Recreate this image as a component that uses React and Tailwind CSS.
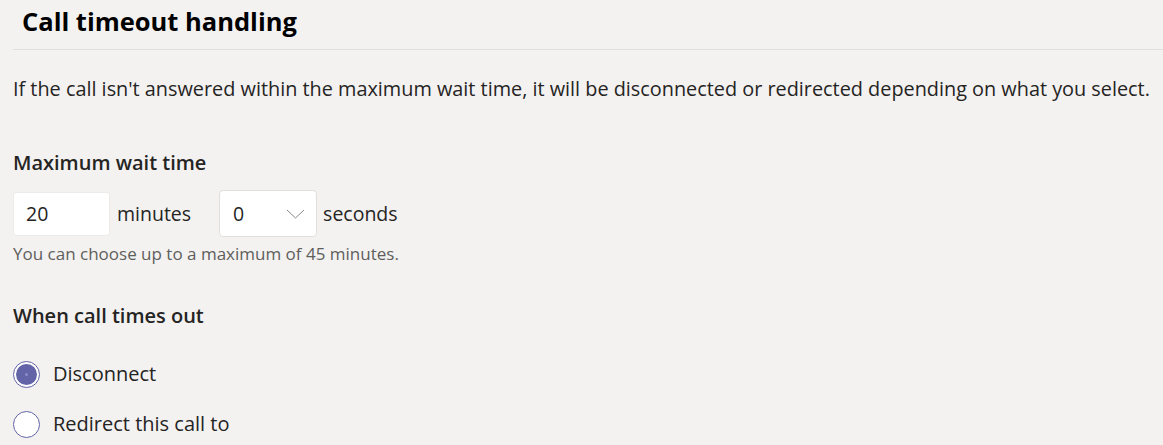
import React, { useState } from 'react';

const RadioOption = ({ label, checked, onSelect }) => (
    <label className="flex h-[28px] items-center gap-[13px] cursor-pointer" onClick={onSelect}>
        <span className="relative flex h-[27px] w-[27px] shrink-0 items-center justify-center rounded-full border border-[#6264a7] bg-white">
            {checked && (
                <span className="flex h-[21px] w-[21px] items-center justify-center rounded-full bg-[#6264a7]">
                    <span className="h-[3px] w-[3px] rounded-full bg-[#8b8cc7]" />
                </span>
            )}
        </span>
        <span className="text-[20px] leading-[28px] text-[#252423]">{label}</span>
    </label>
);

const App = () => {
    const [choice, setChoice] = useState('disconnect');

    return (
        <div className="min-h-screen bg-[#f3f2f1] text-[#252423] font-['Open_Sans',sans-serif]">
            {/* Header */}
            <div className="pl-[22px] pt-[2px] h-[49px]">
                <h1 className="text-[25.5px] font-bold text-black leading-[38px]">Call timeout handling</h1>
            </div>
            <div className="ml-[13px] border-t border-[#e1dfdd]" />

            <div className="px-[13px]">
                <p className="mt-[25px] whitespace-nowrap text-[19.85px] leading-[28px]">
                    If the call isn't answered within the maximum wait time, it will be disconnected or redirected depending on what you select.
                </p>

                {/* Maximum wait time */}
                <h2 className="mt-[46px] text-[20px] font-semibold leading-[28px]">Maximum wait time</h2>
                <div className="mt-[13px] flex items-center text-[19.5px]">
                    <div className="flex h-[44px] w-[97px] items-center rounded-[3px] border border-[#edebe9] bg-white px-[12px]">20</div>
                    <span className="ml-[7px]">minutes</span>
                    <div className="ml-[28px] flex h-[47px] w-[98px] items-center justify-between rounded-[4px] border border-[#e1dfdd] bg-white pl-[13px] pr-[11px]">
                        <span>0</span>
                        <svg width="19" height="10" viewBox="0 0 19 10" fill="none" stroke="#8a8886" strokeWidth="1">
                            <path d="M1 1l8.5 8L18 1" />
                        </svg>
                    </div>
                    <span className="ml-[6px]">seconds</span>
                </div>
                <p className="mt-[6px] text-[17px] text-[#605e5c] leading-[22px]">You can choose up to a maximum of 45 minutes.</p>

                {/* When call times out */}
                <h2 className="mt-[37px] text-[20px] font-semibold leading-[28px]">When call times out</h2>
                <div className="mt-[30px] flex flex-col gap-[22px]">
                    <RadioOption label="Disconnect" checked={choice === 'disconnect'} onSelect={() => setChoice('disconnect')} />
                    <RadioOption label="Redirect this call to" checked={choice === 'redirect'} onSelect={() => setChoice('redirect')} />
                </div>
            </div>
        </div>
    );
};

export default App;
